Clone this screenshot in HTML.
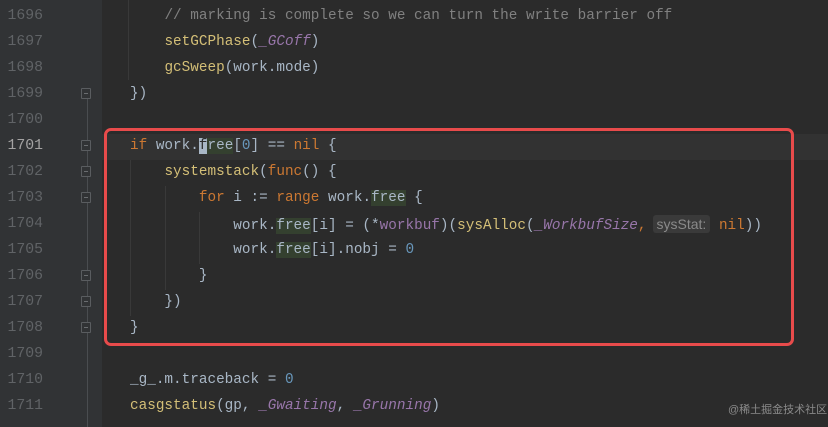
<!DOCTYPE html>
<html><head><meta charset="utf-8"><style>
body{margin:0;width:828px;height:427px;background:#2b2b2b;overflow:hidden;position:relative;font-family:"Liberation Mono",monospace;font-size:14.35px}
.g{position:absolute;left:0;top:0;width:102px;height:427px;background:#313335}
.ln{position:absolute;left:0;width:43px;text-align:right;color:#606366;font-size:14.8px;font-family:"Liberation Mono",monospace}
.c{position:absolute;left:130px;white-space:pre;color:#a9b7c6}
.k{color:#cc7832}.f{color:#d4bf77}.p{color:#9876aa;font-style:italic}.n{color:#6897bb}.cm{color:#808080}
.h{background:#34402f}
.cur{position:absolute;left:102px;top:134px;width:726px;height:26px;background:#323232}
.box{position:absolute;left:104px;top:128px;width:684px;height:212px;border:3px solid #e84b4b;border-radius:7px}
.fold{position:absolute;left:81px;width:10px;height:11px;border:1px solid #5a5d60;box-sizing:border-box;border-radius:1px;background:#313335}
.fold:after{content:"";position:absolute;left:2px;top:4px;width:4px;height:1px;background:#6a6d70}
.ig{position:absolute;width:1px;background:#393939}
.hint{background:#3a3a3a;color:#8a8a8a;font-family:"Liberation Sans",sans-serif;font-style:normal;font-size:14px;border-radius:3px;padding:1px 4px;margin-left:6px}
.wm{position:absolute;left:728px;top:401px;color:#8a8a8a;font-size:11px;font-family:"Liberation Sans","Noto Sans CJK SC",sans-serif}
</style></head><body>
<div class="g"></div>
<div class="cur"></div>
<div style="position:absolute;left:87px;top:90px;width:1px;height:337px;background:#4a4d50"></div>
<div class="ig" style="left:130px;top:160px;height:156px"></div>
<div class="ig" style="left:165px;top:186px;height:104px"></div>
<div class="ig" style="left:199px;top:212px;height:52px"></div>
<div class="ig" style="left:128px;top:0;height:80px"></div>
<div class="fold" style="top:88px"></div>
<div class="fold" style="top:140px"></div>
<div class="fold" style="top:166px"></div>
<div class="fold" style="top:192px"></div>
<div class="fold" style="top:270px"></div>
<div class="fold" style="top:296px"></div>
<div class="fold" style="top:322px"></div>
<div class="ln" style="top:8px">1696</div>
<div class="ln" style="top:34px">1697</div>
<div class="ln" style="top:60px">1698</div>
<div class="ln" style="top:86px">1699</div>
<div class="ln" style="top:112px">1700</div>
<div class="ln" style="top:138px;color:#a4a3a3">1701</div>
<div class="ln" style="top:164px">1702</div>
<div class="ln" style="top:190px">1703</div>
<div class="ln" style="top:216px">1704</div>
<div class="ln" style="top:242px">1705</div>
<div class="ln" style="top:268px">1706</div>
<div class="ln" style="top:294px">1707</div>
<div class="ln" style="top:320px">1708</div>
<div class="ln" style="top:346px">1709</div>
<div class="ln" style="top:372px">1710</div>
<div class="ln" style="top:398px">1711</div>
<div class="c" style="top:8px">    <span class="cm">// marking is complete so we can turn the write barrier off</span></div>
<div class="c" style="top:34px">    <span class="f">setGCPhase</span>(<span class="p">_GCoff</span>)</div>
<div class="c" style="top:60px">    <span class="f">gcSweep</span>(work.mode)</div>
<div class="c" style="top:86px">})</div>
<div class="c" style="top:138px"><span class="k">if</span> work.<span style="background:#a9b7c6;color:#2b2b2b">f</span><span class="h">ree</span>[<span class="n">0</span>] == <span class="k">nil</span> {</div>
<div class="c" style="top:164px">    <span class="f">systemstack</span>(<span class="k">func</span>() {</div>
<div class="c" style="top:190px">        <span class="k">for</span> i := <span class="k">range</span> work.<span class="h">free</span> {</div>
<div class="c" style="top:216px">            work.<span class="h">free</span>[i] = (*<span class="p" style="font-style:normal">workbuf</span>)(<span class="f">sysAlloc</span>(<span class="p">_WorkbufSize</span><span class="k">,</span><span class="hint">sysStat:</span> <span class="k">nil</span>))</div>
<div class="c" style="top:242px">            work.<span class="h">free</span>[i].nobj = <span class="n">0</span></div>
<div class="c" style="top:268px">        }</div>
<div class="c" style="top:294px">    })</div>
<div class="c" style="top:320px">}</div>
<div class="c" style="top:372px">_g_.m.traceback = <span class="n">0</span></div>
<div class="c" style="top:398px"><span class="f">casgstatus</span>(gp, <span class="p">_Gwaiting</span>, <span class="p">_Grunning</span>)</div>
<div class="box"></div>
<div class="wm">@稀土掘金技术社区</div>
</body></html>
